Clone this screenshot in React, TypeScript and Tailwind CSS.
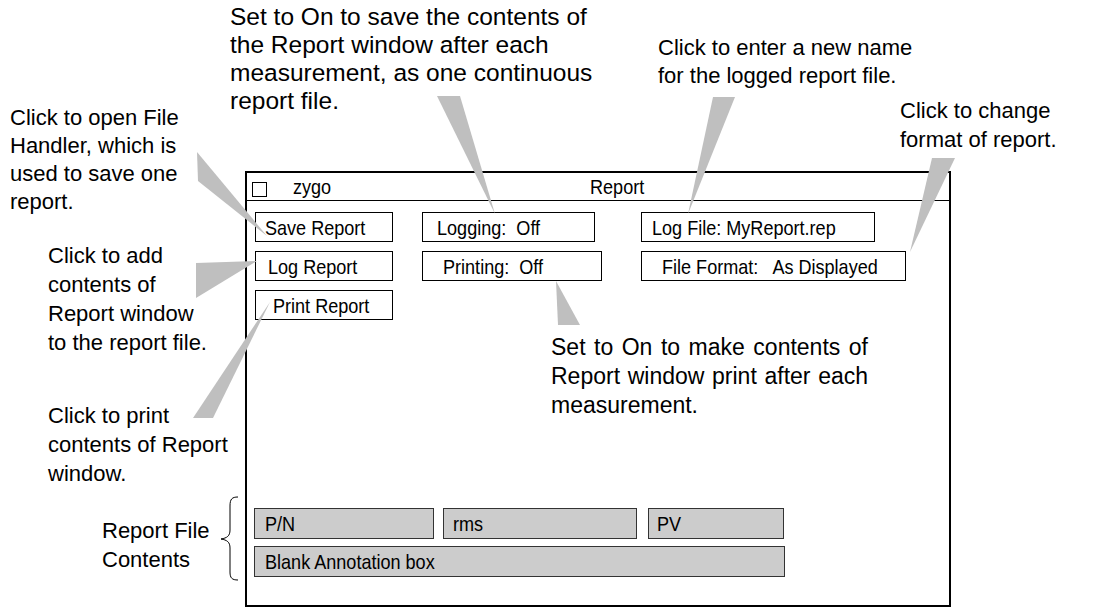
import React from "react";

const sans = { fontFamily: '"Liberation Sans", Arial, sans-serif' } as const;

function N({ children }: { children: React.ReactNode }) {
  return <span className="inline-block origin-left scale-x-[0.86] whitespace-pre">{children}</span>;
}

function Box({ w, children, pl }: { w: string; children: React.ReactNode; pl: string }) {
  return (
    <div className={`h-[30px] border border-black bg-white flex items-center text-[21px] leading-none text-black ${w} ${pl}`}>
      <N>{children}</N>
    </div>
  );
}

function Field({ w, children, pl }: { w: string; children: React.ReactNode; pl: string }) {
  return (
    <div className={`h-[31px] border border-[#333] bg-[#cccccc] flex items-center text-[21px] leading-none text-black ${w} ${pl}`}>
      <N>{children}</N>
    </div>
  );
}

export default function App() {
  return (
    <div className="relative w-[1102px] h-[607px] bg-white overflow-hidden text-black" style={sans}>
      {/* Callout texts */}
      <div className="absolute left-[230px] top-[3px] text-[24.5px] leading-[28px]">
        <div>Set to On to save the contents of</div>
        <div>the Report window after each</div>
        <div>measurement, as one continuous</div>
        <div>report file.</div>
      </div>
      <div className="absolute left-[658px] top-[34px] text-[22px] leading-[28px]">
        <div>Click to enter a new name</div>
        <div>for the logged report file.</div>
      </div>
      <div className="absolute left-[900px] top-[96px] text-[22px] leading-[29px]">
        <div>Click to change</div>
        <div>format of report.</div>
      </div>
      <div className="absolute left-[10px] top-[104px] text-[22px] leading-[28px]">
        <div>Click to open File</div>
        <div>Handler, which is</div>
        <div>used to save one</div>
        <div>report.</div>
      </div>
      <div className="absolute left-[48px] top-[241px] text-[22px] leading-[29px]">
        <div>Click to add</div>
        <div>contents of</div>
        <div>Report window</div>
        <div>to the report file.</div>
      </div>
      <div className="absolute left-[48px] top-[401px] text-[22px] leading-[29px]">
        <div>Click to print</div>
        <div>contents of Report</div>
        <div>window.</div>
      </div>
      <div className="absolute left-[102px] top-[516px] text-[22px] leading-[29px]">
        <div>Report File</div>
        <div>Contents</div>
      </div>
      <div className="absolute left-[551px] top-[333px] w-[317px] text-[23px] leading-[29px]">
        <div className="text-justify [text-align-last:justify]">Set to On to make contents of</div>
        <div className="text-justify [text-align-last:justify]">Report window print after each</div>
        <div>measurement.</div>
      </div>

      {/* Window */}
      <div className="absolute left-[245px] top-[171px] w-[706px] h-[436px] border-2 border-black flex flex-col">
        <div className="relative h-[28px] border-b border-black flex items-center shrink-0">
          <div className="ml-[5px] w-[15px] h-[15px] border border-black mt-[6px]" />
          <div className="ml-[26px] text-[21px] leading-none">
            <N>zygo</N>
          </div>
          <div className="absolute left-[343px] top-0 bottom-0 flex items-center text-[21px] leading-none">
            <N>Report</N>
          </div>
        </div>
        <div className="flex mt-[11px]">
          <div className="ml-[8px] flex flex-col gap-[9px]">
            <Box w="w-[138px]" pl="pl-[9px]">Save Report</Box>
            <Box w="w-[138px]" pl="pl-[12px]">Log Report</Box>
            <Box w="w-[138px]" pl="pl-[17px]">Print Report</Box>
          </div>
          <div className="ml-[29px] flex flex-col gap-[9px] items-start">
            <Box w="w-[173px]" pl="pl-[14px]">Logging:  Off</Box>
            <Box w="w-[180px]" pl="pl-[20px]">Printing:  Off</Box>
          </div>
          <div className="ml-[39px] flex flex-col gap-[9px] items-start">
            <Box w="w-[234px]" pl="pl-[10px]">Log File: MyReport.rep</Box>
            <Box w="w-[265px]" pl="pl-[20px]">File Format:   As Displayed</Box>
          </div>
        </div>
        <div className="mt-auto mb-[28px] ml-[7px] flex flex-col gap-[7px]">
          <div className="flex">
            <Field w="w-[180px]" pl="pl-[10px]">P/N</Field>
            <div className="w-[9px]" />
            <Field w="w-[194px]" pl="pl-[9px]">rms</Field>
            <div className="w-[11px]" />
            <Field w="w-[136px]" pl="pl-[8px]">PV</Field>
          </div>
          <Field w="w-[531px]" pl="pl-[10px]">Blank Annotation box</Field>
        </div>
      </div>

      {/* Pointers and brace */}
      <svg className="absolute inset-0 pointer-events-none" width="1102" height="607" viewBox="0 0 1102 607">
        <g fill="#bfbfbf">
          <polygon points="197,152 198,181 267,236" />
          <polygon points="196,263 196,298 257,261" />
          <polygon points="193,418 213,418 270,302" />
          <polygon points="437,96 460,96 495,214" />
          <polygon points="713,97 735,97 688,214" />
          <polygon points="932,158 955,158 910,252" />
          <polygon points="558,325 580,325 556,281" />
        </g>
        <path d="M238,497 C232,497 230,499 230,506 L230,530 C230,536 227,538 221,539 C227,540 230,542 230,548 L230,572 C230,578 232,580 238,580" fill="none" stroke="#000" strokeWidth="1" />
      </svg>
    </div>
  );
}
